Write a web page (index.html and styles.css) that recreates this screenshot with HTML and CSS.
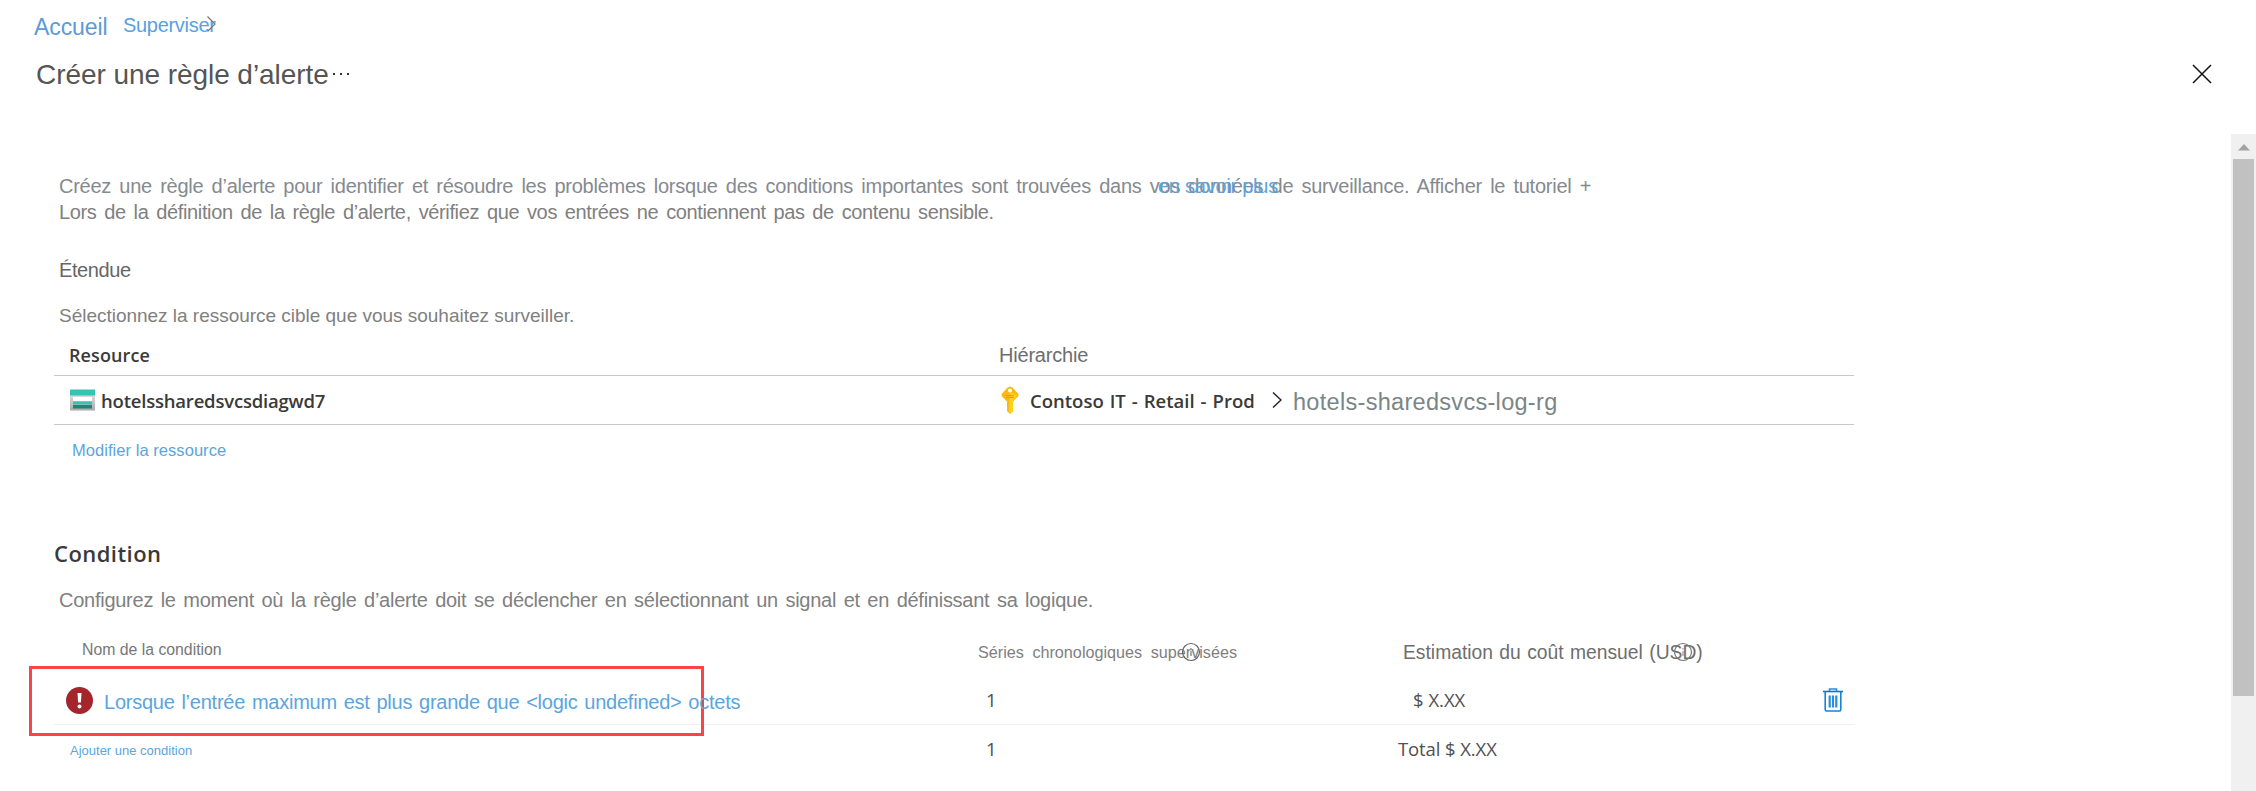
FILE: index.html
```html
<!DOCTYPE html>
<html lang="fr">
<head>
<meta charset="utf-8">
<title>Créer une règle d’alerte</title>
<link rel="stylesheet" href="styles.css">
</head>
<body>
<header>
  <nav class="crumbs">
    <a class="crumb-home">Accueil</a>
    <a class="crumb-monitor">Superviser<svg class="crumb-chevron" width="9" height="16" viewBox="0 0 9 16"><path d="M0.5 0.5 8 8 0.5 15.500" fill="none" stroke="#777" stroke-width="1.200"/></svg></a>
  </nav>
  <div class="title-row">
    <h1>Créer une règle d’alerte</h1>
    <svg class="more" width="18" height="4" viewBox="0 0 18 4"><path d="M1 1h2v2H1zM8 1h2v2H8zM15 1h2v2h-2z" fill="#333"/></svg>
    <svg class="close" width="20" height="20" viewBox="0 0 20 20"><path d="M1 1 19 19M19 1 1 19" stroke="#111" stroke-width="1.500"/></svg>
  </div>
</header>
<div class="body">
  <main>
    <p class="intro intro-first"><span>Créez une règle d’alerte pour identifier et résoudre les problèmes lorsque des conditions importantes sont trouvées dans vos données de surveillance. Afficher le tutoriel +</span><a class="learn">en savoir plus</a></p>
    <p class="intro intro-second">Lors de la définition de la règle d’alerte, vérifiez que vos entrées ne contiennent pas de contenu sensible.</p>
    <h2 class="scope">Étendue</h2>
    <p class="scope-text">Sélectionnez la ressource cible que vous souhaitez surveiller.</p>

    <section class="table resources">
      <div class="row head">
        <div class="ui col-resource">Resource</div>
        <div class="col-hier">Hiérarchie</div>
      </div>
      <div class="row">
        <div class="ui cell-resource">
          <svg width="25" height="22" viewBox="0 0 25 22"><defs><linearGradient id="g" x2="0" y2="1"><stop offset="0" stop-color="#eee"/><stop offset="1" stop-color="#aaa"/></linearGradient></defs><rect y="1" width="25" height="20.500" fill="url(#g)"/><rect y="0.500" width="25" height="6" fill="#37c2b1"/><rect x="3" y="8" width="19" height="4" fill="#fff"/><rect x="3" y="12.500" width="19" height="3" fill="#37c2b1"/><rect x="3" y="16" width="19" height="3.500" fill="#258277"/></svg>
          <span>hotelssharedsvcsdiagwd7</span>
        </div>
        <div class="cell-hier">
          <svg class="key" width="18" height="28" viewBox="0 0 18 28"><path d="M9 .5 11.500 1.500 17 7.500Q18 9 17 10.500L12 15.500V19L11 20 12 21V23L11 24V26L9 28 6 25V15.500L1 10.500Q0 9 1 7.500L6.500 1.500Z" fill="#fdb913"/><path d="M9 6 16 9 12 15V26L9 27 8 25Z" fill="#ffd21a"/><circle cx="9" cy="4.500" r="2" fill="#fff"/><path d="M5 9.500h8M5 11.500h8" stroke="#f09a13" stroke-width="1"/></svg>
          <span class="ui subscription">Contoso IT - Retail - Prod</span>
          <svg class="path-chevron" width="10" height="16" viewBox="0 0 10 16"><path d="M1 .5 9 8 1 15.500" fill="none" stroke="#222" stroke-width="1.400"/></svg>
          <span class="group">hotels-sharedsvcs-log-rg</span>
        </div>
      </div>
    </section>
    <a class="edit">Modifier la ressource</a>

    <h2 class="ui condition">Condition</h2>
    <p class="condition-text">Configurez le moment où la règle d’alerte doit se déclencher en sélectionnant un signal et en définissant sa logique.</p>

    <section class="table conditions">
      <div class="row head">
        <div class="col-name">Nom de la condition</div>
        <div class="col-series">Séries chronologiques supervisées<svg class="info info-series" width="20" height="20" viewBox="0 0 20 20"><circle cx="10" cy="10" r="8.500" fill="none" stroke="#666" stroke-width="1.200"/><path d="M10 9v5M10 6v1.500" stroke="#777" stroke-width="1.200"/></svg></div>
        <div class="col-cost">Estimation du coût mensuel (USD)<svg class="info info-cost" width="20" height="20" viewBox="0 0 20 20"><circle cx="10" cy="10" r="8.500" fill="none" stroke="#777" stroke-width="1.200"/><path d="M10 9v5M10 6v1.500" stroke="#999" stroke-width="1.200"/></svg></div>
      </div>
      <div class="row alert">
        <div class="cell-name">
          <svg width="27" height="27" viewBox="0 0 27 27"><circle cx="13.500" cy="13.500" r="13.500" fill="#a4262c"/><path d="M11.500 6h4l-.6 9.500h-2.800z" fill="#fff"/><circle cx="13.500" cy="19.500" r="2" fill="#fff"/></svg>
          <a>Lorsque l’entrée maximum est plus grande que &lt;logic undefined&gt; octets</a>
        </div>
        <div class="value count">1</div>
        <div class="value cost">$ X.XX</div>
        <svg class="trash" width="20" height="24" viewBox="0 0 20 24"><path d="M0 3.500h20" stroke="#0078d4" stroke-width="1.600"/><path d="M6.500 3V1h7v2" fill="none" stroke="#2b8ddb" stroke-width="1.600"/><path d="M2.200 3.500V21.500Q2.200 23 3.500 23h13q1.300 0 1.300-1.500V3.500" fill="none" stroke="#1683d8" stroke-width="1.600"/><path d="M6.700 7.500V19.500M10 7.500V19.500M13.300 7.500V19.500" stroke="#2b8ddb" stroke-width="2.200"/></svg>
      </div>
      <div class="row total">
        <div class="add"><a>Ajouter une condition</a></div>
        <div class="value count">1</div>
        <div class="value sum">Total $ X.XX</div>
      </div>
    </section>
  </main>
  <aside class="scrollbar">
    <svg width="12" height="7" viewBox="0 0 12 7"><path d="M0 6.500 6 0l6 6.500z" fill="#a3a3a3"/></svg>
    <div class="thumb"></div>
  </aside>
</div>
</body>
</html>
```
FILE: styles.css
```css
*, *::before { box-sizing: border-box; }
body {
  margin: 0;
  height: 791px;
  overflow: hidden;
  background: #fff;
  font-family: "Liberation Sans", Arial, sans-serif;
  color: #808080;
  white-space: nowrap;
}
h1, h2, p { margin: 0; font-weight: 400; }
a { color: #5ba5de; }
svg { display: block; flex: none; }
.ui { font-family: "Open Sans", "Noto Sans", sans-serif; font-weight: 600; color: #3a3a3a; }

.crumbs { display: flex; height: 54px; padding: 10px 0 0 34px; line-height: 30px; }
.crumb-home { width: 88px; padding-top: 2px; font-size: 23px; letter-spacing: -.1px; color: #5b9bd8; }
.crumb-monitor { position: relative; padding-left: 1px; font-size: 20px; letter-spacing: -.3px; color: #5a9fe0; }
.crumb-chevron { position: absolute; left: 85px; top: 6px; }
.title-row { display: flex; height: 80px; padding-left: 35px; line-height: 41px; }
h1 { width: 297px; padding-left: 1px; font-size: 28px; letter-spacing: -.06px; color: #555; }
.more { margin-top: 18px; }
.close { margin: 10px 44px 0 auto; }

.body { display: flex; height: 657px; }
main { flex: 1; padding: 39px 0 0 54px; }
.intro { padding-left: 5px; line-height: 26px; }
.intro-first { position: relative; font-size: 20px; letter-spacing: -.25px; word-spacing: 2.9px; color: #858a90; }
.learn { position: absolute; left: 1104px; top: 0; word-spacing: 0; }
.intro-second { font-size: 20px; letter-spacing: -.36px; word-spacing: 2.6px; }
.scope { margin-top: 32px; padding-left: 5px; font-size: 20px; letter-spacing: -.4px; line-height: 26px; color: #666; }
.scope-text { margin-top: 20px; padding-left: 5px; font-size: 19px; letter-spacing: -.02px; line-height: 26px; }

.table { width: 1800px; }
.row { display: grid; align-items: center; border-bottom: 1px solid #c8c8c8; }
.resources { margin-top: -1px; }
.resources .row { grid-template-columns: 945px 1fr; height: 49px; }
.resources .head { height: 48px; padding-top: 7px; }
.col-resource { padding: 0 0 1px 15px; font-size: 18px; letter-spacing: .1px; }
.col-hier { padding-top: 1px; font-size: 20px; letter-spacing: -.2px; color: #6e6e6e; }
.cell-resource { display: flex; align-items: center; gap: 6px; padding-left: 16px; font-size: 18.5px; letter-spacing: -.2px; }
.cell-hier { display: flex; align-items: center; }
.key { margin-left: 2px; }
.subscription { width: 241px; margin-left: 11px; font-size: 18.5px; word-spacing: 1.2px; }
.path-chevron { margin-left: 1px; }
.group { margin: 5px 0 0 11px; font-size: 23.5px; letter-spacing: .3px; color: #7a8586; }
.edit { display: block; margin-top: 15px; padding-left: 18px; font-size: 16.5px; letter-spacing: .05px; line-height: 20px; }

.condition { margin-top: 78px; font-size: 22px; line-height: 30px; letter-spacing: .45px; }
.condition-text { margin-top: 19px; padding-left: 5px; font-size: 20px; letter-spacing: -.26px; word-spacing: 2.25px; line-height: 26px; }

.conditions { margin-top: 26px; }
.conditions .row { grid-template-columns: 924px 424px 1fr auto; height: 59px; border-color: #f0f0f0; }
.conditions .head { height: 27px; border: 0; }
.col-name { padding: 0 0 6px 28px; font-size: 15.8px; color: #777; }
.col-series { position: relative; font-size: 16.2px; word-spacing: 4px; }
.col-cost { position: relative; padding-left: 1px; font-size: 19.3px; word-spacing: 1px; color: #6e6e6e; }
.info { position: absolute; top: 0; }
.info-series { left: 203px; top: -1px; }
.info-cost { left: 271px; top: 0; }
.alert { position: relative; padding: 10px 11px 0 0; }
.alert::before { content: ""; position: absolute; left: -25px; top: 0; width: 675px; height: 70px; border: 3px solid #fc4444; }
.cell-name { position: relative; display: flex; align-items: center; gap: 11px; padding-left: 12px; font-size: 20px; letter-spacing: -.24px; word-spacing: 1.5px; }
.cell-name a { padding-top: 4px; }
.value { padding-bottom: 2px; font-family: "Open Sans", "Noto Sans", sans-serif; font-size: 18.5px; color: #505050; }
.count { padding-left: 8px; }
.cost { padding-left: 11px; }
.conditions .total { height: 48px; border: 0; }
.add { padding: 2px 0 0 16px; font-size: 13px; }
.sum { margin-left: -4px; letter-spacing: -.1px; }

.scrollbar { width: 25px; padding-top: 10px; background: #f0f0f0; }
.scrollbar svg { margin: 0 auto; }
.thumb { width: 21px; height: 537px; margin: 8px 2px 0; background: #c1c1c1; }
```
